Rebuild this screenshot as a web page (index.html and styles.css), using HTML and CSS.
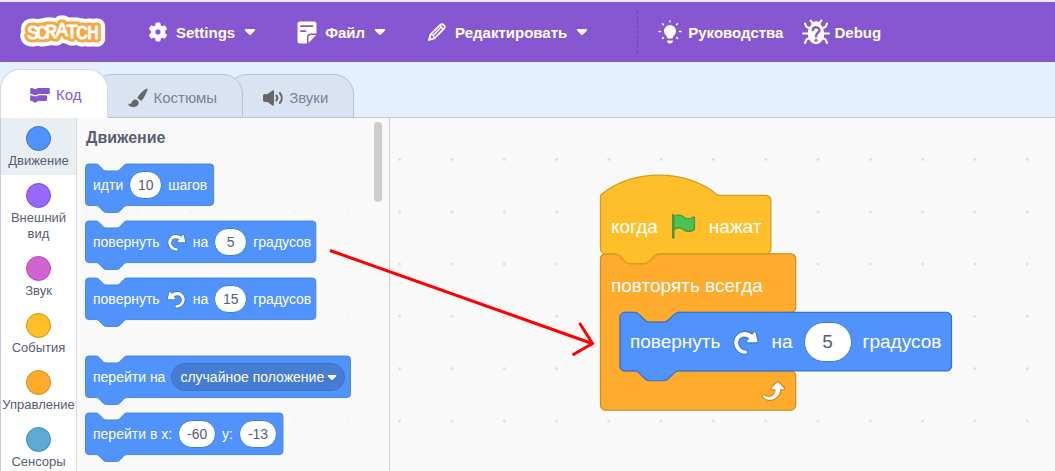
FILE: index.html
```html
<!DOCTYPE html>
<html lang="ru">
<head>
<meta charset="utf-8">
<title>Scratch</title>
<link rel="stylesheet" href="styles.css">
</head>
<body>
<svg class="defs" aria-hidden="true">
  <defs>
    <symbol id="turn" viewBox="0 0 24 24">
      <path fill="#3d79cc" d="M22.68,12.2a1.6,1.6,0,0,1-1.27.63H13.72a1.59,1.59,0,0,1-1.16-2.58l1.12-1.41a4.82,4.82,0,0,0-3.14-.77,4.31,4.31,0,0,0-2,.8,4.25,4.25,0,0,0-1.34,1.73,5.06,5.06,0,0,0,.54,4.62A5.58,5.58,0,0,0,12,17.74h0a2.26,2.26,0,0,1-.16,4.52A10.25,10.25,0,0,1,3.74,18,10.14,10.14,0,0,1,2.25,8.78,9.7,9.7,0,0,1,5.08,4.64,9.92,9.92,0,0,1,9.66,2.5a10.66,10.66,0,0,1,7.72,1.68l1.08-1.35a1.57,1.57,0,0,1,1.24-.6,1.6,1.6,0,0,1,1.54,1.21l1.7,7.37A1.57,1.57,0,0,1,22.68,12.2Z"/>
      <path fill="#fff" d="M21.38,11.83H13.77a.59.59,0,0,1-.43-1l1.75-2.19a5.9,5.9,0,0,0-4.7-1.58,5.07,5.07,0,0,0-4.11,3.17A6,6,0,0,0,7,15.77a6.51,6.51,0,0,0,5,2.92,1.31,1.31,0,0,1-.08,2.62,9.3,9.3,0,0,1-7.35-3.82A9.16,9.16,0,0,1,3.17,9.12,8.51,8.51,0,0,1,5.71,5.4,8.76,8.76,0,0,1,9.82,3.48a9.71,9.71,0,0,1,7.75,2.07l1.67-2.1a.59.59,0,0,1,1,.21L22,11.08A.59.59,0,0,1,21.38,11.83Z"/>
    </symbol>
    <symbol id="caret" viewBox="0 0 12 8">
      <path fill="#fff" d="M2 1h8c1.200 0 1.500 1 .8 1.800L7 6.500c-.6.600-1.400.600-2 0L1.200 2.800C.5 2 .8 1 2 1z"/>
    </symbol>
    <pattern id="dots" x="373.500" y="238" width="52.300" height="52.300" patternUnits="userSpaceOnUse">
      <circle cx="26.100" cy="26.100" r="1.400" fill="#dcdcdc"/>
    </pattern>
  </defs>
</svg>

<header class="menu-bar">
  <a class="logo" href="#" aria-label="Scratch">
    <svg width="88" height="34" viewBox="0 0 88 34">
      <g class="logo-text">
        <text class="logo-outer" x="7 16 25 36 46 56 67" y="24 24 23 21 23 24 24">SCRATCH</text>
        <text class="logo-inner" x="7 16 25 36 46 56 67" y="24 24 23 21 23 24 24">SCRATCH</text>
        <text class="logo-face" x="7 16 25 36 46 56 67" y="24 24 23 21 23 24 24">SCRATCH</text>
      </g>
    </svg>
  </a>
  <nav class="menus">
    <button class="menu menu-settings">
      <svg width="20" height="20" viewBox="0 0 20 20"><path fill="#fff" fill-rule="evenodd" stroke="#fff" stroke-width="1" stroke-linejoin="round" d="M8.200 1h3.600l.6 2.700 1.700 1 2.700-.9 1.800 3.200-2 1.900v2.200l2 1.900-1.800 3.200-2.700-.9-1.700 1-.6 2.700H8.200l-.6-2.700-1.700-1-2.700.9L1.400 13l2-1.900V8.900L1.400 7l1.800-3.200 2.700.9 1.700-1zM10 6.800a3.200 3.200 0 1 0 0 6.400a3.200 3.200 0 0 0 0-6.400z"/></svg>
      <span>Settings</span>
      <svg class="caret" width="12" height="8"><use href="#caret"/></svg>
    </button>
    <button class="menu menu-file">
      <svg width="20" height="23" viewBox="0 0 20 23">
        <path fill="#fff" d="M3 .500h14a2.500 2.500 0 0 1 2.500 2.500v9.500h-5.500a4 4 0 0 0-4 4V22.500H3A2.500 2.500 0 0 1 .500 20V3A2.500 2.500 0 0 1 3 .500z"/>
        <path fill="#fff" d="M11.500 22v-5.500a2.500 2.500 0 0 1 2.500-2.500h5.200z"/>
        <path stroke="#8657d0" stroke-width="1.800" stroke-linecap="round" d="M4 5.200h11.500M4 10.200h4.500"/>
      </svg>
      <span>Файл</span>
      <svg class="caret" width="12" height="8"><use href="#caret"/></svg>
    </button>
    <button class="menu menu-edit">
      <svg width="20" height="20" viewBox="0 0 20 20" fill="none" stroke="#fff" stroke-linejoin="round" stroke-linecap="round">
        <path stroke-width="1.800" d="M2 18l1.400-5.300L13 3.200c2.600-2.600 6.300 1 3.800 3.700L7.200 16.500z"/>
        <path stroke-width="1.300" d="M3.500 12.700c2 .100 3.600 1.700 3.700 3.700M6 13.500l8-8M12.200 4.200c2 .300 3.300 1.600 3.600 3.500"/>
        <path fill="#fff" stroke="none" d="M1.500 18.500l1-4 3 3z"/>
      </svg>
      <span>Редактировать</span>
      <svg class="caret" width="12" height="8"><use href="#caret"/></svg>
    </button>
  </nav>
  <span class="divider"></span>
  <button class="menu menu-guide">
    <svg width="24" height="24" viewBox="0 0 24 24" fill="#fff">
      <path d="M12 5a6 6 0 0 1 6 6c0 2-.9 3.200-1.900 4.300-.8.900-1 1.400-1.200 2.200-.1.700-.5 1-1 1h-3.800c-.5 0-.9-.3-1-1-.2-.8-.4-1.300-1.200-2.200C6.900 14.200 6 13 6 11a6 6 0 0 1 6-6z"/>
      <path d="M9 20.500h6c0 2-1.500 3-3 3s-3-1-3-3z"/>
      <path stroke="#fff" stroke-width="1.500" stroke-linecap="round" d="M12 1v.800M4.500 3.800l1 1M19.500 3.800l-1 1M1 11.500h1.500M21.500 11.500H23M4.500 18.500l1-1M19.500 18.500l-1-1"/>
    </svg>
    <span>Руководства</span>
  </button>
  <button class="menu menu-debug">
    <svg width="28" height="26" viewBox="0 0 28 26">
      <g fill="none" stroke="#fff" stroke-width="2" stroke-linecap="round" stroke-linejoin="round">
        <path d="M11 4.500L8.500 1.500M17 4.500l2.500-3M7.500 9L4.500 8 3 4.500M20.500 9l3-1L25 4.500M6.500 14.500H1M21.500 14.500H27M7.500 19l-3 1.500L3 24M20.500 19l3 1.500L25 24"/>
      </g>
      <path fill="#fff" d="M14 2.200c2.800 0 4.700 1.800 5 4 2 1.900 3.200 4.800 3.200 8C22.200 20.500 18.700 25 14 25s-8.200-4.500-8.200-10.800c0-3.200 1.200-6.100 3.200-8 .3-2.200 2.200-4 5-4z"/>
      <path fill="none" stroke="#8657d0" stroke-width="2.300" stroke-linecap="round" d="M10.800 11.200c.2-4 6.700-3.800 6.600 0 0 2.600-3.400 2.500-3.400 6.300"/>
      <circle cx="14" cy="21.300" r="1.500" fill="#8657d0"/>
    </svg>
    <span>Debug</span>
  </button>
</header>

<div class="tabs" role="tablist">
  <button class="tab tab-code active" role="tab" aria-selected="true">
    <svg width="20" height="16" viewBox="0 0 20 16" fill="#8555d0">
      <path d="M1.200 1h1.300l1.200 1h2.600l1.200-1h11.300q1 0 1 1v4q0 1-1 1H8.200l-1.200 1H3.500L2.300 7H1.200q-1 0-1-1V2q0-1 1-1z"/>
      <path d="M1.200 8.300h.8l1.200 1h4l1.200-1H16q1 0 1 1v3.700q0 1-1 1H7.800l-1.300 1.500H3.800L2.500 14H1.200q-1 0-1-1V9.300q0-1 1-1z"/>
    </svg>
    <span>Код</span>
  </button>
  <button class="tab tab-costumes" role="tab" aria-selected="false">
    <svg width="20" height="20" viewBox="0 0 20 20" fill="#666">
      <path d="M18.500.700c.9-.4 1.300.2 1 1C18.500 5 16 10 13.300 13l-4-3.300C11.500 6 15 2.300 18.500.700z"/>
      <path d="M8.300 11.700c1.500.5 2.600 1.700 2.400 3.300-.3 3-3.300 4.200-6 4-2-.1-3.800-1-4.300-2.400-.3-.8.3-1 1-.9 1.600.2 1.700-.3 2.300-1.500.8-1.700 2.500-3.200 4.600-2.500z"/>
    </svg>
    <span>Костюмы</span>
  </button>
  <button class="tab tab-sounds" role="tab" aria-selected="false">
    <svg width="20" height="16" viewBox="0 0 20 16" fill="#666">
      <path d="M9.500.500c.9-.4 1.500 0 1.500.900v13.200c0 .9-.6 1.300-1.500.900L4.500 12H2c-1.200 0-2-.8-2-2V6c0-1.200.8-2 2-2h2.500z"/>
      <path fill="none" stroke="#666" stroke-width="2" stroke-linecap="round" d="M13.300 5.500c1.300 1.500 1.300 3.500 0 5M16.800 3c2.600 3 2.600 7 0 10"/>
    </svg>
    <span>Звуки</span>
  </button>
</div>

<main class="editor">
  <nav class="categories">
    <button class="category selected"><i class="bubble motion"></i>Движение</button>
    <button class="category"><i class="bubble looks"></i>Внешний вид</button>
    <button class="category"><i class="bubble sound"></i>Звук</button>
    <button class="category"><i class="bubble events"></i>События</button>
    <button class="category"><i class="bubble control"></i>Управление</button>
    <button class="category"><i class="bubble sensing"></i>Сенсоры</button>
  </nav>

  <section class="palette">
    <svg class="grid" aria-hidden="true"><rect width="3000" height="2000" fill="url(#dots)" transform="translate(-77 -118)"/></svg>
    <div class="palette-list">
      <h2>Движение</h2>
      <div class="block">
        <svg class="shape" width="130" height="49"><path transform="translate(.5 0) scale(.866)" d="M0,4A4,4 0 0,1 4,0H12c2,0 3,1 4,2l4,4c1,1 2,2 4,2h12c2,0 3,-1 4,-2l4,-4c1,-1 2,-2 4,-2H144a4,4 0 0,1 4,4v40a4,4 0 0,1 -4,4H48c-2,0 -3,1 -4,2l-4,4c-1,1 -2,2 -4,2h-12c-2,0 -3,-1 -4,-2l-4,-4c-1,-1 -2,-2 -4,-2H4a4,4 0 0,1 -4,-4z"/></svg>
        <div class="fields"><span>идти</span><input aria-label="шагов" value="10"><span>шагов</span></div>
      </div>
      <div class="block">
        <svg class="shape" width="232" height="49"><path transform="translate(.5 0) scale(.866)" d="M0,4A4,4 0 0,1 4,0H12c2,0 3,1 4,2l4,4c1,1 2,2 4,2h12c2,0 3,-1 4,-2l4,-4c1,-1 2,-2 4,-2H262a4,4 0 0,1 4,4v40a4,4 0 0,1 -4,4H48c-2,0 -3,1 -4,2l-4,4c-1,1 -2,2 -4,2h-12c-2,0 -3,-1 -4,-2l-4,-4c-1,-1 -2,-2 -4,-2H4a4,4 0 0,1 -4,-4z"/></svg>
        <div class="fields"><span>повернуть</span><svg class="turn" width="21" height="21"><use href="#turn"/></svg><span>на</span><input aria-label="градусов вправо" value="5"><span>градусов</span></div>
      </div>
      <div class="block">
        <svg class="shape" width="232" height="49"><path transform="translate(.5 0) scale(.866)" d="M0,4A4,4 0 0,1 4,0H12c2,0 3,1 4,2l4,4c1,1 2,2 4,2h12c2,0 3,-1 4,-2l4,-4c1,-1 2,-2 4,-2H262a4,4 0 0,1 4,4v40a4,4 0 0,1 -4,4H48c-2,0 -3,1 -4,2l-4,4c-1,1 -2,2 -4,2h-12c-2,0 -3,-1 -4,-2l-4,-4c-1,-1 -2,-2 -4,-2H4a4,4 0 0,1 -4,-4z"/></svg>
        <div class="fields"><span>повернуть</span><svg class="turn left" width="21" height="21"><use href="#turn"/></svg><span>на</span><input aria-label="градусов влево" value="15"><span>градусов</span></div>
      </div>
      <div class="block group-start">
        <svg class="shape" width="267" height="49"><path transform="translate(.5 0) scale(.866)" d="M0,4A4,4 0 0,1 4,0H12c2,0 3,1 4,2l4,4c1,1 2,2 4,2h12c2,0 3,-1 4,-2l4,-4c1,-1 2,-2 4,-2H302a4,4 0 0,1 4,4v40a4,4 0 0,1 -4,4H48c-2,0 -3,1 -4,2l-4,4c-1,1 -2,2 -4,2h-12c-2,0 -3,-1 -4,-2l-4,-4c-1,-1 -2,-2 -4,-2H4a4,4 0 0,1 -4,-4z"/></svg>
        <div class="fields"><span>перейти на</span>
          <div class="dropdown"><select aria-label="перейти на"><option>случайное положение</option></select><svg class="drop-caret" width="10" height="7"><use href="#caret"/></svg></div>
        </div>
      </div>
      <div class="block">
        <svg class="shape" width="199" height="49"><path transform="translate(.5 0) scale(.866)" d="M0,4A4,4 0 0,1 4,0H12c2,0 3,1 4,2l4,4c1,1 2,2 4,2h12c2,0 3,-1 4,-2l4,-4c1,-1 2,-2 4,-2H224a4,4 0 0,1 4,4v40a4,4 0 0,1 -4,4H48c-2,0 -3,1 -4,2l-4,4c-1,1 -2,2 -4,2h-12c-2,0 -3,-1 -4,-2l-4,-4c-1,-1 -2,-2 -4,-2H4a4,4 0 0,1 -4,-4z"/></svg>
        <div class="fields"><span>перейти в x:</span><input class="wide" aria-label="x" value="-60"><span>y:</span><input class="wide" aria-label="y" value="-13"></div>
      </div>
    </div>
    <div class="scroll-thumb"></div>
  </section>

  <section class="workspace">
    <svg class="grid" aria-hidden="true"><rect width="3000" height="2000" fill="url(#dots)" transform="translate(-390 -118)"/></svg>
    <div class="script">
      <svg class="script-shapes" width="353" height="237">
        <g transform="translate(.5 20.300) scale(1.220)">
          <path fill="#ffab2e" stroke="#cf8b17" d="M0,52A4,4 0 0,1 4,48H12c2,0 3,1 4,2l4,4c1,1 2,2 4,2h12c2,0 3,-1 4,-2l4,-4c1,-1 2,-2 4,-2H156a4,4 0 0,1 4,4v40a4,4 0 0,1 -4,4H64c-2,0 -3,1 -4,2l-4,4c-1,1 -2,2 -4,2h-12c-2,0 -3,-1 -4,-2l-4,-4c-1,-1 -2,-2 -4,-2h-8a4,4 0 0,0 -4,4v40a4,4 0 0,0 4,4H156a4,4 0 0,1 4,4v24a4,4 0 0,1 -4,4H4a4,4 0 0,1 -4,-4z"/>
          <path fill="#ffbf2b" stroke="#cf9e22" d="M0,0c25,-22 71,-22 96,0H135.600a4,4 0 0,1 4,4v40a4,4 0 0,1 -4,4H48c-2,0 -3,1 -4,2l-4,4c-1,1 -2,2 -4,2h-12c-2,0 -3,-1 -4,-2l-4,-4c-1,-1 -2,-2 -4,-2H4a4,4 0 0,1 -4,-4z"/>
          <path fill="#5193fd" stroke="#3373cc" transform="translate(16 96)" d="M0,4A4,4 0 0,1 4,0H12c2,0 3,1 4,2l4,4c1,1 2,2 4,2h12c2,0 3,-1 4,-2l4,-4c1,-1 2,-2 4,-2H267.700a4,4 0 0,1 4,4v40a4,4 0 0,1 -4,4H48c-2,0 -3,1 -4,2l-4,4c-1,1 -2,2 -4,2h-12c-2,0 -3,-1 -4,-2l-4,-4c-1,-1 -2,-2 -4,-2H4a4,4 0 0,1 -4,-4z"/>
        </g>
      </svg>
      <div class="script-rows">
        <div class="row hat"><span>когда</span>
          <svg width="29" height="29" viewBox="0 0 24 24"><path fill="#45993d" d="M20.800,3.700c-0.400-0.200-0.900-0.100-1.200,0.200c-2,1.600-4.800,1.600-6.800,0c-2.300-1.900-5.600-2.300-8.300-1v-0.400c0-0.600-0.500-1-1-1s-1,0.500-1,1v18.800c0,0.500,0.500,1,1,1h0.100c0.500,0,1-0.500,1-1v-6.400c1-0.700,2.100-1.200,3.400-1.300c1.200,0,2.400,0.400,3.400,1.200c2.900,2.300,7,2.300,9.800,0c0.300-0.200,0.400-0.500,0.400-0.900V4.700C21.600,4.200,21.300,3.800,20.800,3.700z"/><path fill="#4cbf56" d="M20.600,4.800l-0.100,9.100v0c-2.500,2-6.100,2-8.600,0c-1.100-0.900-2.500-1.400-4-1.400c-1.200,0.100-2.300,0.500-3.400,1.100V4c2.500-1.400,5.500-1.100,7.700,0.600c2.400,1.900,5.700,1.900,8.100,0h0.200c0,0,0.100,0,0.100,0.100L20.600,4.800z"/></svg>
          <span>нажат</span></div>
        <div class="row"><span>повторять всегда</span></div>
        <div class="row nested"><span>повернуть</span><svg width="29" height="29"><use href="#turn"/></svg><span>на</span><input aria-label="градусов" value="5"><span>градусов</span></div>
        <div class="row foot">
          <svg width="29" height="29" viewBox="0 0 24 24"><path fill="#cf8b17" d="M23.300,11c-0.300,0.600-0.900,1-1.500,1h-1.600c-0.100,1.300-0.500,2.500-1.100,3.600c-0.900,1.700-2.300,3.200-4.100,4.100c-1.700,0.900-3.600,1.200-5.500,0.900c-1.800-0.300-3.500-1.100-4.900-2.300c-0.700-0.700-0.700-1.900,0-2.600c0.600-0.600,1.600-0.700,2.300-0.200H7c0.900,0.600,1.900,0.900,2.900,0.900s1.900-0.300,2.700-0.900c1.100-0.800,1.800-2.100,1.800-3.500h-1.500c-0.900,0-1.700-0.700-1.700-1.700c0-0.400,0.200-0.900,0.500-1.200l4.400-4.400c0.700-0.600,1.700-0.600,2.400,0L23,9.200C23.500,9.700,23.600,10.400,23.300,11z"/><path fill="#fff" d="M21.800,11h-2.600c0,1.500-0.300,2.900-1,4.200c-0.800,1.600-2.100,2.800-3.700,3.600c-1.500,0.800-3.300,1.100-4.900,0.800c-1.600-0.200-3.200-1-4.400-2.100c-0.400-0.300-0.400-0.900-0.100-1.200c0.300-0.400,0.900-0.400,1.200-0.100l0,0c1,0.700,2.200,1.100,3.400,1.100s2.300-0.300,3.300-1c0.900-0.600,1.600-1.500,2-2.600c0.300-0.900,0.400-1.800,0.200-2.800h-2.400c-0.400,0-0.700-0.300-0.700-0.700c0-0.200,0.100-0.300,0.200-0.400l4.400-4.400c0.300-0.300,0.700-0.300,0.900,0L22,9.800c0.300,0.300,0.400,0.600,0.300,0.900S22,11,21.800,11z"/></svg>
        </div>
      </div>
    </div>
  </section>
  <svg class="drag-arrow" width="270" height="112" viewBox="0 0 270 112" aria-hidden="true"><path fill="none" stroke="#f00" stroke-width="3" d="M4 6.500L266 99.500M253.500 79l13 20.500L246.500 111"/></svg>
</main>
</body>
</html>
```
FILE: styles.css
```css
* {
  box-sizing: border-box;
}

body {
  margin: 0;
  height: 100vh;
  display: flex;
  flex-direction: column;
  overflow: hidden;
  background: #f9f9f9;
  font-family: "Liberation Sans", Arial, sans-serif;
  color: #575e75;
}

button,
input,
select {
  margin: 0;
  border: 0;
  background: none;
  font: inherit;
  color: inherit;
}

svg {
  display: block;
  flex: none;
}

.defs {
  position: absolute;
  width: 0;
  height: 0;
}

/* Menu bar */

.menu-bar {
  flex: none;
  display: flex;
  align-items: center;
  height: 62px;
  padding-left: 20px;
  border-top: 2px solid #e9e9f2;
  background: #8657d0;
  color: #fff;
  font-size: 15px;
  font-weight: bold;
}

.logo-text {
  font-family: "Liberation Mono", monospace;
  font-size: 20px;
  font-weight: normal;
  stroke-linejoin: round;
}

.logo-outer {
  fill: #fff;
  stroke: #fff;
  stroke-width: 15px;
}

.logo-inner {
  fill: #f9a73e;
  stroke: #f9a73e;
  stroke-width: 7px;
}

.logo-face {
  fill: #fff;
  stroke: #fff;
  stroke-width: 1px;
}

.menus {
  display: flex;
  gap: 41px;
  margin-left: 40px;
}

.menu {
  display: flex;
  align-items: center;
  gap: 8px;
  padding: 0;
  white-space: nowrap;
}

.caret {
  margin-left: 1px;
}

.divider {
  height: 42px;
  margin: 0 20px 0 49px;
  border-left: 1px dashed #6c45b0;
}

.menu-guide {
  gap: 6px;
}

.menu-debug {
  gap: 4px;
  margin-left: 19px;
}

/* Tabs */

.tabs {
  flex: none;
  display: flex;
  align-items: flex-end;
  height: 56px;
  border-bottom: 1px solid #c3cad8;
  background: #e5f0ff;
  font-size: 15px;
}

.tab {
  display: flex;
  align-items: center;
  gap: 6px;
  height: 44px;
  margin: 0 0 -1px -16px;
  padding: 3px 25px 0 35px;
  border: 1px solid #b9c2d3;
  border-radius: 20px 20px 0 0;
  background: #d9e3f2;
  color: #7c8298;
}

.tab.active {
  z-index: 3;
  height: 49px;
  margin-left: 0;
  padding: 2px 25px 0 29px;
  border-color: #d5d9e0;
  border-bottom-color: #fff;
  background: #fff;
  color: #855cd6;
}

.tab-costumes {
  z-index: 2;
}

.tab-sounds {
  z-index: 1;
}

/* Editor */

.editor {
  position: relative;
  flex: 1;
  display: flex;
  min-height: 0;
}

.categories {
  flex: none;
  width: 77px;
  border-left: 1px solid #c3cad8;
  border-right: 1px solid #d9d9d9;
  background: #fff;
  overflow: hidden;
}

.category {
  display: flex;
  flex-direction: column;
  align-items: center;
  gap: 2px;
  width: 100%;
  padding: 8px 0 6px;
  font-size: 13px;
  line-height: 16px;
}

.category.selected {
  background: #e9eef2;
}

.bubble {
  width: 25px;
  height: 25px;
  border: 1px solid;
  border-radius: 50%;
}

.motion { background: #5193fd; border-color: #3373cc; }
.looks { background: #9966ff; border-color: #774dcb; }
.sound { background: #cf63cf; border-color: #bd42bd; }
.events { background: #ffbf2b; border-color: #cc9900; }
.control { background: #ffab2e; border-color: #cf8b17; }
.sensing { background: #5faad2; border-color: #2e8eb8; }

.palette {
  flex: none;
  position: relative;
  display: flex;
  align-items: flex-start;
  justify-content: space-between;
  width: 313px;
  padding: 4px 7px 0 8px;
  border-right: 1px solid #d0d0d0;
  overflow: hidden;
}

.grid {
  position: absolute;
  top: 0;
  left: 0;
  width: 100%;
  height: 100%;
}

.palette .grid {
  opacity: 0.2;
}

.palette-list {
  position: relative;
  display: flex;
  flex-direction: column;
  gap: 16px;
}

.palette h2 {
  margin: 6px 0 1px 1px;
  font-size: 16px;
  line-height: 19px;
}

.scroll-thumb {
  width: 8px;
  height: 80px;
  border-radius: 4px;
  background: #cdcdcd;
}

.block {
  display: grid;
  height: 41px;
  justify-content: start;
  font-size: 14px;
  color: #fff;
}

.block > *,
.script > * {
  grid-area: 1 / 1;
}

.shape {
  overflow: visible;
  fill: #5193fd;
  stroke: #3d7fdc;
}

.group-start {
  margin-top: 21px;
}

.fields {
  position: relative;
  display: flex;
  align-items: center;
  gap: 6px;
  height: 42px;
  padding-left: 8px;
  white-space: nowrap;
}

.turn.left {
  transform: scaleX(-1);
}

.block input,
.row input {
  width: 33px;
  height: 28px;
  padding: 0;
  border: 1px solid #3d7fdc;
  border-radius: 20px;
  background: #fff;
  color: #575e75;
  text-align: center;
}

.block input.wide {
  width: 38px;
}

.dropdown {
  display: grid;
  align-items: center;
}

.dropdown > * {
  grid-area: 1 / 1;
}

.dropdown select {
  appearance: none;
  width: 174px;
  height: 28px;
  padding: 0 0 0 8px;
  border: 1px solid #3d74c8;
  border-radius: 14px;
  background: #467dd2;
}

.drop-caret {
  justify-self: end;
  margin-right: 8px;
  pointer-events: none;
}

/* Workspace */

.workspace {
  position: relative;
  flex: 1;
  overflow: hidden;
}

.script {
  position: absolute;
  top: 57px;
  left: 210px;
  display: grid;
  font-size: 19px;
  color: #fff;
  white-space: nowrap;
}

.script-shapes {
  overflow: visible;
}

.script-rows {
  position: relative;
  padding-top: 22px;
}

.row {
  display: flex;
  align-items: center;
  gap: 11px;
  height: 59px;
  padding-left: 11px;
}

.row.nested {
  height: 54px;
  padding-left: 30px;
}

.row.foot {
  height: 42px;
  padding-left: 157px;
}

.row input {
  width: 48px;
  height: 40px;
}

.drag-arrow {
  position: absolute;
  top: 126px;
  left: 326px;
  pointer-events: none;
}
```
